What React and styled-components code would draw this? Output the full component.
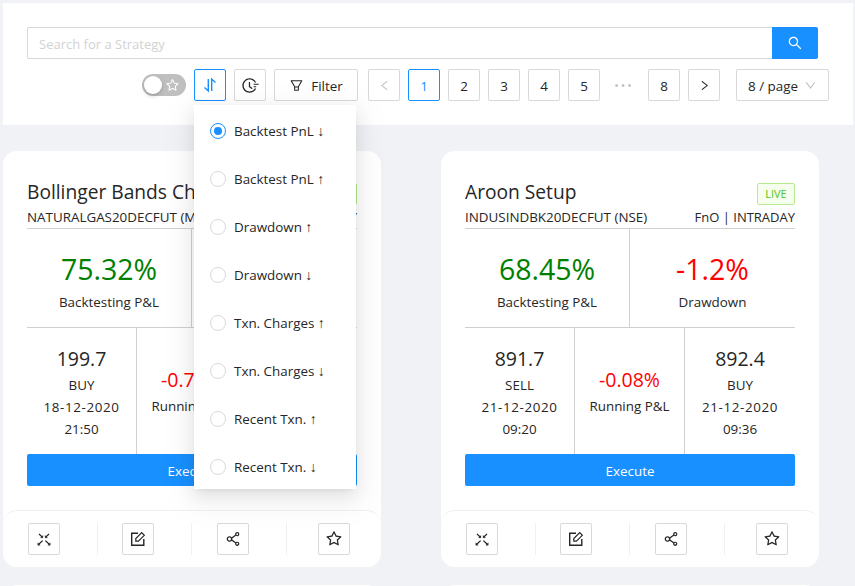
import React from "react";
import styled, { createGlobalStyle } from "styled-components";
import {
  AiOutlineSearch,
  AiOutlineStar,
  AiOutlineFilter,
  AiOutlineLeft,
  AiOutlineRight,
  AiOutlineDown,
  AiOutlineShareAlt,
  AiOutlineFieldTime,
} from "react-icons/ai";

const sortOptions = [
  { label: "Backtest PnL", arrow: "↓" },
  { label: "Backtest PnL", arrow: "↑" },
  { label: "Drawdown", arrow: "↑" },
  { label: "Drawdown", arrow: "↓" },
  { label: "Txn. Charges", arrow: "↑" },
  { label: "Txn. Charges", arrow: "↓" },
  { label: "Recent Txn.", arrow: "↑" },
  { label: "Recent Txn.", arrow: "↓" },
];

const strategies = [
  {
    name: "Bollinger Bands Channel",
    symbol: "NATURALGAS20DECFUT (MCX)",
    kind: "FnO | INTRADAY",
    pnl: "75.32%",
    drawdown: "-1.4%",
    entry: { price: "199.7", side: "BUY", date: "18-12-2020", time: "21:50" },
    running: "-0.75%",
    exit: { price: "198.2", side: "SELL", date: "18-12-2020", time: "22:10" },
  },
  {
    name: "Aroon Setup",
    symbol: "INDUSINDBK20DECFUT (NSE)",
    kind: "FnO | INTRADAY",
    pnl: "68.45%",
    drawdown: "-1.2%",
    entry: { price: "891.7", side: "SELL", date: "21-12-2020", time: "09:20" },
    running: "-0.08%",
    exit: { price: "892.4", side: "BUY", date: "21-12-2020", time: "09:36" },
  },
];

const pages = ["1", "2", "3", "4", "5"];

const SortIcon = () => (
  <svg width="16" height="16" viewBox="0 0 16 16" fill="none" stroke="currentColor" strokeWidth="1.4">
    <path d="M6.3 2v12L2.5 10.5" />
    <path d="M9.7 14V2l3.8 3.5" />
  </svg>
);

const ExpandIcon = () => (
  <svg width="16" height="16" viewBox="0 0 16 16" fill="currentColor" stroke="currentColor" strokeWidth="1.3">
    <path d="M3 3l3.6 3.4M13 3L9.4 6.4M3 13l3.6-3.4M13 13L9.4 9.6" fill="none" />
    <path d="M6.8 6.8V4.6L4.6 6.8zM9.2 6.8V4.6l2.2 2.2z" strokeWidth="0.4" />
    <path d="M1.8 14.2V11.8L4.2 14.2zM14.2 14.2V11.8L11.8 14.2z" strokeWidth="0.4" />
  </svg>
);

const EditIcon = () => (
  <svg width="16" height="16" viewBox="0 0 16 16" fill="none" stroke="currentColor" strokeWidth="1.4">
    <path d="M8 2.2H1.7v12.1h12.1V8" />
    <path d="M5.8 10.2V7.6L11.7 1.7l2.6 2.6-5.9 5.9z" strokeWidth="1.2" />
  </svg>
);

const Trade = ({ trade }) => (
  <TradeCell>
    <TradePrice>{trade.price}</TradePrice>
    <TradeLine>{trade.side}</TradeLine>
    <TradeLine $wide>{trade.date}</TradeLine>
    <TradeLine>{trade.time}</TradeLine>
  </TradeCell>
);

const StrategyCard = ({ item }) => (
  <Card>
    <CardBody>
      <TitleRow>
        <Title>{item.name}</Title>
        <LiveTag>LIVE</LiveTag>
      </TitleRow>
      <SubRow>
        <span>{item.symbol}</span>
        <KindText>{item.kind}</KindText>
      </SubRow>
      <StatsRow>
        <StatCell>
          <StatValue $color="#008000">{item.pnl}</StatValue>
          <StatLabel>Backtesting P&amp;L</StatLabel>
        </StatCell>
        <StatCell>
          <StatValue $color="#ff0000">{item.drawdown}</StatValue>
          <StatLabel>Drawdown</StatLabel>
        </StatCell>
      </StatsRow>
      <TradesRow>
        <Trade trade={item.entry} />
        <RunningCell>
          <RunningValue>{item.running}</RunningValue>
          <TradeLine>Running P&amp;L</TradeLine>
        </RunningCell>
        <Trade trade={item.exit} />
      </TradesRow>
      <ExecuteButton>Execute</ExecuteButton>
    </CardBody>
    <CardFooter>
      <FooterCell>
        <SquareButton><ExpandIcon /></SquareButton>
      </FooterCell>
      <FooterCell>
        <SquareButton><EditIcon /></SquareButton>
      </FooterCell>
      <FooterCell>
        <SquareButton><AiOutlineShareAlt size={18} /></SquareButton>
      </FooterCell>
      <FooterCell $last>
        <SquareButton><AiOutlineStar size={18} /></SquareButton>
      </FooterCell>
    </CardFooter>
  </Card>
);

const App = () => (
  <Page>
    <GlobalStyle />
    <TopPanel>
      <SearchRow>
        <SearchInput placeholder="Search for a Strategy" />
        <SearchButton><AiOutlineSearch size={16} /></SearchButton>
      </SearchRow>
      <ControlsRow>
        <Toggle>
          <Knob />
          <ToggleStar><AiOutlineStar size={15} /></ToggleStar>
        </Toggle>
        <SortWrap>
          <SquareButton $active><SortIcon /></SquareButton>
          <SortMenu>
            {sortOptions.map((option, i) => (
              <SortItem key={option.label + option.arrow}>
                <Radio $checked={i === 0} />
                <span>{option.label} <SortArrow>{option.arrow}</SortArrow></span>
              </SortItem>
            ))}
          </SortMenu>
        </SortWrap>
        <SquareButton><AiOutlineFieldTime size={19} /></SquareButton>
        <FilterButton><AiOutlineFilter size={15} />Filter</FilterButton>
        <Pager>
          <SquareButton $disabled><AiOutlineLeft size={13} /></SquareButton>
          {pages.map((p) => (
            <PageNumber key={p} $active={p === "1"}>{p}</PageNumber>
          ))}
          <Dots>•••</Dots>
          <PageNumber>8</PageNumber>
          <SquareButton><AiOutlineRight size={13} /></SquareButton>
        </Pager>
        <PageSize>8 / page<AiOutlineDown size={13} color="#bfbfbf" /></PageSize>
      </ControlsRow>
    </TopPanel>
    <CardGrid>
      {strategies.map((item) => (
        <StrategyCard key={item.name} item={item} />
      ))}
      <NextCard />
      <NextCard />
    </CardGrid>
  </Page>
);

export default App;

const GlobalStyle = createGlobalStyle`
  html, body {
    margin: 0;
    height: 100%;
    overflow: hidden;
    background: #f0f2f5;
  }
  body {
    font-family: "Open Sans", "Liberation Sans", sans-serif;
    font-size: 13.4px;
    color: #262626;
  }
  * { box-sizing: border-box; }
`;

const Page = styled.div`
  padding: 3px 2px 0 3px;
  height: 586px;
  overflow: hidden;
`;

const TopPanel = styled.div`
  background: #fff;
  height: 122px;
  padding: 24px 24px 0;
`;

const SearchRow = styled.div`
  display: flex;
  width: 791px;
  height: 32px;
`;

const SearchInput = styled.input`
  flex: 1;
  border: 1px solid #d9d9d9;
  border-right: 0;
  border-radius: 2px 0 0 2px;
  padding: 2px 11px 0;
  font: inherit;
  font-size: 13px;
  outline: none;
  &::placeholder { color: #d2d2d2; }
`;

const SearchButton = styled.button`
  width: 46px;
  border: 0;
  border-radius: 0 2px 2px 0;
  background: #1890ff;
  color: #fff;
  display: flex;
  align-items: center;
  justify-content: center;
`;

const ControlsRow = styled.div`
  display: flex;
  align-items: center;
  justify-content: flex-end;
  margin-top: 10px;
  gap: 8px;
  height: 32px;
`;

const Toggle = styled.div`
  position: relative;
  width: 44px;
  height: 22px;
  border-radius: 11px;
  background: #bfbfbf;
  display: flex;
  align-items: center;
  justify-content: flex-end;
  padding-right: 6px;
  color: #fff;
`;

const Knob = styled.span`
  position: absolute;
  left: 2px;
  top: 2px;
  width: 18px;
  height: 18px;
  border-radius: 50%;
  background: #fff;
  box-shadow: 0 2px 4px rgba(0, 35, 11, 0.2);
`;

const ToggleStar = styled.span`
  display: flex;
`;

const SquareButton = styled.button`
  width: 32px;
  height: 32px;
  padding: 0;
  background: #fff;
  border: 1px solid ${(p) => (p.$active ? "#1890ff" : "#d9d9d9")};
  border-radius: 2px;
  color: ${(p) => (p.$active ? "#1890ff" : p.$disabled ? "#bfbfbf" : "#262626")};
  font: inherit;
  display: flex;
  align-items: center;
  justify-content: center;
`;

const PageNumber = styled(SquareButton)`
  padding-top: 2px;
`;

const SortWrap = styled.div`
  position: relative;
`;

const SortMenu = styled.div`
  position: absolute;
  z-index: 10;
  top: 36px;
  left: 0;
  width: 162px;
  height: 384px;
  padding-top: 2px;
  background: #fff;
  box-shadow: 0 3px 6px -4px rgba(0, 0, 0, 0.12), 0 6px 16px rgba(0, 0, 0, 0.08), 0 9px 28px 8px rgba(0, 0, 0, 0.05);
`;

const SortItem = styled.div`
  height: 48px;
  display: flex;
  align-items: center;
  padding-left: 16px;
  gap: 8px;
`;

const SortArrow = styled.span`
  font-family: "Liberation Sans", sans-serif;
  font-size: 14px;
`;

const Radio = styled.span`
  width: 16px;
  height: 16px;
  border-radius: 50%;
  border: 1px solid ${(p) => (p.$checked ? "#1890ff" : "#d9d9d9")};
  display: flex;
  align-items: center;
  justify-content: center;
  &::after {
    content: "";
    display: ${(p) => (p.$checked ? "block" : "none")};
    width: 8px;
    height: 8px;
    border-radius: 50%;
    background: #1890ff;
  }
`;

const FilterButton = styled.button`
  width: 84px;
  height: 32px;
  padding: 1px 0 0;
  background: #fff;
  border: 1px solid #d9d9d9;
  border-radius: 2px;
  color: #262626;
  font: inherit;
  display: flex;
  align-items: center;
  justify-content: center;
  gap: 7px;
`;

const Pager = styled.div`
  display: flex;
  gap: 8px;
  margin-left: 2px;
`;

const Dots = styled.span`
  width: 32px;
  height: 32px;
  display: flex;
  align-items: center;
  justify-content: center;
  color: #bfbfbf;
  font-size: 12px;
  letter-spacing: 2px;
`;

const PageSize = styled.div`
  width: 93px;
  height: 32px;
  margin-left: 8px;
  padding: 1px 11px 0;
  border: 1px solid #d9d9d9;
  border-radius: 2px;
  background: #fff;
  display: flex;
  align-items: center;
  justify-content: space-between;
`;

const CardGrid = styled.div`
  display: grid;
  grid-template-columns: 378px 378px;
  column-gap: 60px;
  row-gap: 18px;
  margin-top: 26px;
`;

const Card = styled.div`
  background: #fff;
  border-radius: 14px;
  height: 416px;
  display: flex;
  flex-direction: column;
`;

const NextCard = styled.div`
  background: #fff;
  border-radius: 14px 14px 0 0;
  height: 20px;
`;

const CardBody = styled.div`
  padding: 27px 24px 0;
  flex: 1;
`;

const TitleRow = styled.div`
  display: flex;
  justify-content: space-between;
  align-items: center;
  height: 28px;
  white-space: nowrap;
`;

const Title = styled.div`
  font-size: 19.2px;
  padding-bottom: 2px;
`;

const LiveTag = styled.span`
  flex: none;
  width: 38px;
  height: 22px;
  margin-top: 3px;
  border: 1px solid #b7eb8f;
  border-radius: 2px;
  background: #f6ffed;
  color: #52c41a;
  font-size: 11px;
  display: flex;
  align-items: center;
  justify-content: center;
`;

const SubRow = styled.div`
  display: flex;
  justify-content: space-between;
  height: 23px;
  line-height: 23px;
  border-bottom: 1px solid #d0d0d0;
  white-space: nowrap;
`;

const KindText = styled.span`
  font-size: 13px;
`;

const StatsRow = styled.div`
  display: grid;
  grid-template-columns: 1fr 1fr;
  height: 99px;
  border-bottom: 1px solid #d0d0d0;
`;

const StatCell = styled.div`
  text-align: center;
  padding-top: 20px;
  &:first-child { border-right: 1px solid #d0d0d0; }
`;

const StatValue = styled.div`
  font-size: 28.5px;
  line-height: 40px;
  color: ${(p) => p.$color};
`;

const StatLabel = styled.div`
  line-height: 22px;
  margin-top: 2px;
`;

const TradesRow = styled.div`
  display: grid;
  grid-template-columns: repeat(3, 110px);
  height: 126px;
`;

const TradeCell = styled.div`
  text-align: center;
  padding-top: 17px;
  &:not(:last-child) { border-right: 1px solid #d0d0d0; }
`;

const RunningCell = styled(TradeCell)`
  padding-top: 38px;
`;

const TradePrice = styled.div`
  font-size: 19.5px;
  line-height: 28px;
  margin-bottom: 1px;
`;

const RunningValue = styled(TradePrice)`
  color: #ff0000;
`;

const TradeLine = styled.div`
  line-height: 22px;
  letter-spacing: ${(p) => (p.$wide ? "0.6px" : "0")};
`;

const ExecuteButton = styled.button`
  display: block;
  width: 100%;
  height: 32px;
  padding: 2px 0 0;
  border: 0;
  border-radius: 2px;
  background: #1890ff;
  color: #fff;
  font: inherit;
`;

const CardFooter = styled.div`
  display: grid;
  grid-template-columns: repeat(4, 1fr);
  height: 57px;
  padding: 12px 0;
  border-top: 1px solid #f0f0f0;
  border-radius: 14px;
`;

const FooterCell = styled.div`
  display: flex;
  justify-content: center;
  padding-right: ${(p) => (p.$last ? "0" : "12px")};
  ${(p) => (p.$last ? "" : "border-right: 1px solid #f0f0f0;")}
`;
